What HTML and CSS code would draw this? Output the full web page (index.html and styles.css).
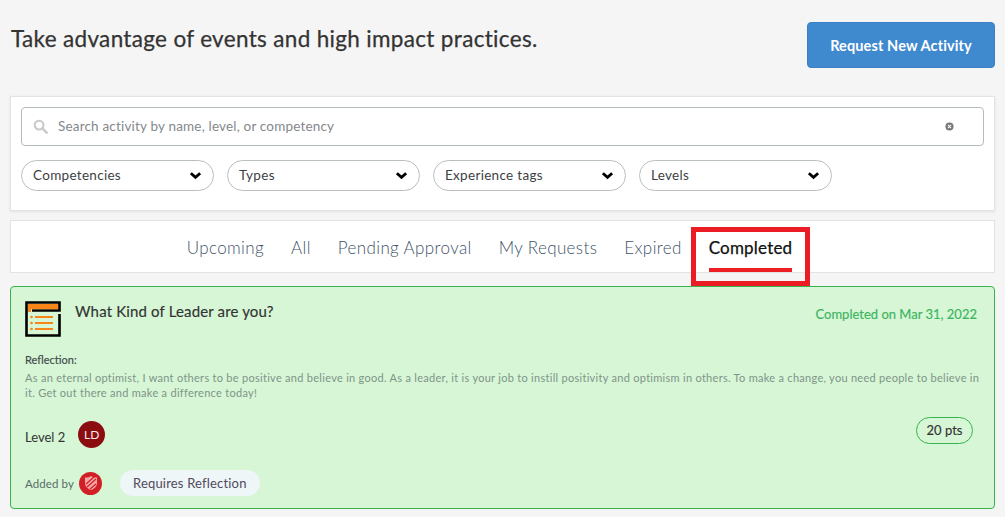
FILE: index.html
```html
<!DOCTYPE html>
<html lang="en">
<head>
<meta charset="utf-8">
<title>Activities</title>
<link rel="stylesheet" href="styles.css">
</head>
<body>
<header class="top">
  <h1 class="title">Take advantage of events and high impact practices.</h1>
  <button class="request">Request New Activity</button>
</header>
<section class="filters">
  <div class="search">
    <svg class="search-icon" viewBox="0 0 16 16" width="15" height="15"><circle cx="6.5" cy="6.5" r="4.7" fill="none" stroke="#c9c9c9" stroke-width="2.2"/><path d="M10 10l4.6 4.6" stroke="#c9c9c9" stroke-width="2.6" stroke-linecap="round"/></svg>
    <span class="placeholder">Search activity by name, level, or competency</span>
    <svg class="clear" viewBox="0 0 10 10" width="9" height="9"><circle cx="5" cy="5" r="4.5" fill="#777"/><path d="M3.3 3.3l3.4 3.4M6.7 3.3l-3.4 3.4" stroke="#fff" stroke-width="1.2"/></svg>
  </div>
  <div class="selects">
    <div class="select"><span>Competencies</span><svg viewBox="0 0 14 9" width="13" height="9"><path d="M2 2l5 4.5L12 2" fill="none" stroke="#000" stroke-width="3"/></svg></div>
    <div class="select"><span>Types</span><svg viewBox="0 0 14 9" width="13" height="9"><path d="M2 2l5 4.5L12 2" fill="none" stroke="#000" stroke-width="3"/></svg></div>
    <div class="select"><span>Experience tags</span><svg viewBox="0 0 14 9" width="13" height="9"><path d="M2 2l5 4.5L12 2" fill="none" stroke="#000" stroke-width="3"/></svg></div>
    <div class="select"><span>Levels</span><svg viewBox="0 0 14 9" width="13" height="9"><path d="M2 2l5 4.5L12 2" fill="none" stroke="#000" stroke-width="3"/></svg></div>
  </div>
</section>
<nav class="tabs">
  <a class="tab">Upcoming</a>
  <a class="tab">All</a>
  <a class="tab">Pending Approval</a>
  <a class="tab">My Requests</a>
  <a class="tab">Expired</a>
  <a class="tab active">Completed<span class="highlight"></span></a>
</nav>
<article class="card">
  <div class="card-head">
    <svg class="card-icon" viewBox="0 0 36 36" width="36" height="36">
      <path d="M34.500 13V34.500H1.500V1.500H34.500V9.500H7" fill="none" stroke="#000" stroke-width="2.600"/>
      <rect x="3" y="3" width="30" height="5.200" fill="#f98518"/>
      <rect x="3" y="8" width="3" height="3" fill="#f98518"/>
      <g fill="#f98518"><circle cx="6.500" cy="16" r="1.300"/><circle cx="6.500" cy="22" r="1.300"/><circle cx="6.500" cy="28" r="1.300"/><rect x="10" y="15" width="18" height="2"/><rect x="10" y="21" width="18" height="2"/><rect x="10" y="27" width="18" height="2"/></g>
    </svg>
    <h2 class="card-title">What Kind of Leader are you?</h2>
    <span class="completed-on">Completed on Mar 31, 2022</span>
  </div>
  <h3 class="reflection-label">Reflection:</h3>
  <p class="reflection">As an eternal optimist, I want others to be positive and believe in good. As a leader, it is your job to instill positivity and optimism in others. To make a change, you need people to believe in it. Get out there and make a difference today!</p>
  <div class="level-row">
    <span class="level">Level 2</span>
    <span class="avatar">LD</span>
    <span class="pts">20 pts</span>
  </div>
  <div class="added-row">
    <span class="added">Added by</span>
    <span class="badge"><svg viewBox="0 0 14 16" width="14" height="16"><path d="M1 2.500C4 2.500 5.500 2 7 1c1.500 1 3 1.500 6 1.500V8c0 3.500-3 6-6 7-3-1-6-3.500-6-7z" fill="#f3a6a6"/><path d="M2 9l8-7M3 12l9-8M6 14l6-5" stroke="#d11f25" stroke-width="1.200"/></svg></span>
    <span class="pill">Requires Reflection</span>
  </div>
</article>
</body>
</html>
```
FILE: styles.css
```css
* { box-sizing: border-box; }
html, body { height: 100%; }
body {
  margin: 0;
  padding: 0 10px;
  background: #f5f5f5;
  font-family: "Lato", "Liberation Sans", sans-serif;
  color: #333;
  overflow: hidden;
}
.top {
  display: flex;
  justify-content: space-between;
  align-items: flex-start;
  height: 96px;
  padding-top: 22px;
}
.title {
  margin: 3px 0 0 1px;
  font-size: 22.500px;
  line-height: 28px;
  font-weight: 400;
  letter-spacing: .33px;
  -webkit-text-stroke: .25px #333;
  color: #333;
}
.request {
  width: 188px;
  height: 46px;
  border: 1px solid #3a82c4;
  border-radius: 4px;
  background: #3f89cf;
  color: #fff;
  font: 700 14.500px "Lato", sans-serif;
  letter-spacing: .12px;
}
.filters {
  height: 115px;
  background: #fff;
  border: 1px solid #e3e3e3;
  box-shadow: 0 1px 3px rgba(0,0,0,.08);
  padding: 10px;
}
.search {
  display: flex;
  align-items: center;
  height: 39px;
  border: 1px solid #b4bbbb;
  border-radius: 4px;
  padding: 0 29px 0 11px;
}
.placeholder {
  flex: 1;
  margin-left: 10px;
  padding-bottom: 1px;
  font-size: 13.500px;
  letter-spacing: .18px;
  color: #85888c;
}
.selects {
  display: flex;
  gap: 13px;
  margin-top: 14px;
}
.select {
  display: flex;
  justify-content: space-between;
  align-items: center;
  width: 193px;
  height: 31px;
  border: 1px solid #b9bfc0;
  border-radius: 16px;
  padding: 0 11px 1px;
  font-size: 13.500px;
  letter-spacing: .3px;
  color: #3c3f44;
}
.tabs {
  display: flex;
  justify-content: center;
  align-items: flex-start;
  gap: 27px;
  height: 53px;
  margin-top: 9px;
  padding: 16px 26px 0 0;
  background: #fff;
  border: 1px solid #e3e3e3;
}
.tab {
  position: relative;
  font-size: 17px;
  line-height: 22px;
  font-weight: 300;
  letter-spacing: .38px;
  color: #3e5368;
}
.tab.active {
  font-weight: 400;
  letter-spacing: .2px;
  -webkit-text-stroke: .25px #111;
  color: #111;
  height: 35px;
  border-bottom: 4px solid #ec2024;
}
.highlight {
  position: absolute;
  left: -18px;
  right: -18px;
  top: -10px;
  height: 59px;
  border: 5px solid #ec1c24;
}
.card {
  height: 223px;
  margin-top: 13px;
  padding: 14px 14px 0;
  background: #d6f6d6;
  border: 1px solid #37b24d;
  border-radius: 4px;
}
.card-head {
  display: flex;
  align-items: flex-start;
  height: 38px;
}
.card-title {
  margin: 0 0 0 14px;
  font-size: 15px;
  line-height: 20px;
  font-weight: 400;
  letter-spacing: .15px;
  -webkit-text-stroke: .15px #333;
  color: #333;
}
.completed-on {
  margin: 5px 3px 0 auto;
  font-size: 13px;
  font-weight: 400;
  -webkit-text-stroke: .15px #3cb460;
  color: #3cb460;
}
.reflection-label {
  margin: 14px 0 0;
  font-size: 11px;
  line-height: 14px;
  font-weight: 400;
  -webkit-text-stroke: .15px #3f4a4a;
  color: #3f4a4a;
}
.reflection {
  margin: 3px 0 0;
  font-size: 11px;
  line-height: 15px;
  letter-spacing: .285px;
  color: #7f9488;
}
.level-row {
  display: flex;
  align-items: center;
  margin-top: 20px;
  height: 28px;
}
.level {
  padding-top: 6px;
  font-size: 13px;
  color: #333;
}
.avatar {
  display: flex;
  align-items: center;
  justify-content: center;
  width: 27px;
  height: 27px;
  margin-left: 13px;
  border-radius: 50%;
  background: #8c0d10;
  color: #f4e6ee;
  font-size: 12px;
}
.pts {
  margin: -8px 7px 0 auto;
  width: 57px;
  height: 27px;
  line-height: 25px;
  text-align: center;
  border: 1px solid #37b24d;
  border-radius: 14px;
  font-size: 13px;
  -webkit-text-stroke: .15px #333;
  color: #333;
}
.added-row {
  display: flex;
  align-items: center;
  margin-top: 22px;
}
.added {
  font-size: 11.500px;
  letter-spacing: .1px;
  color: #5b6a66;
}
.badge {
  display: flex;
  align-items: center;
  justify-content: center;
  width: 23px;
  height: 23px;
  margin-left: 5px;
  border-radius: 50%;
  background: #d11f25;
}
.pill {
  margin-left: 18px;
  padding: 0 13px;
  height: 26px;
  line-height: 27px;
  border-radius: 13px;
  background: #eef6f8;
  font-size: 13px;
  letter-spacing: .18px;
  color: #514a5c;
}
```
